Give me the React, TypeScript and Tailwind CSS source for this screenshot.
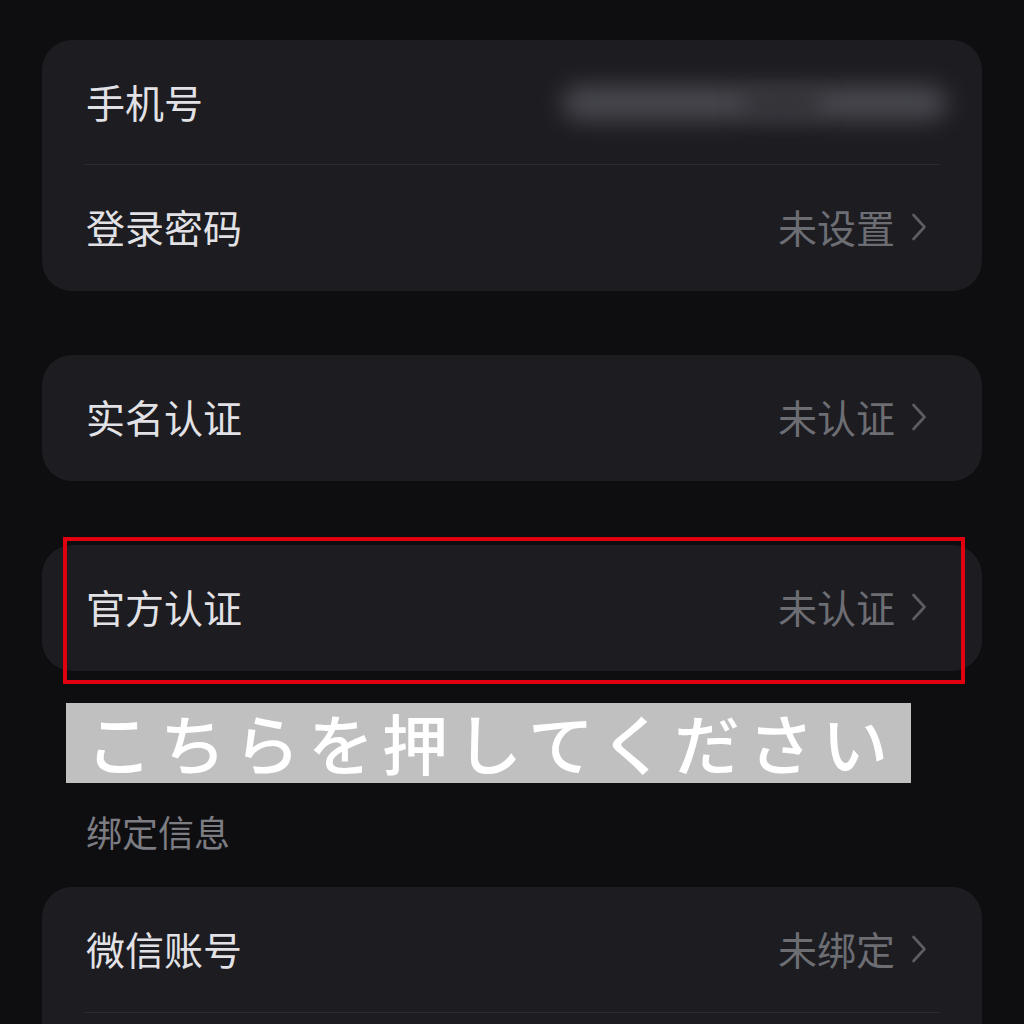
const cjk = "font-['Noto_Sans_CJK_SC','Noto_Sans',sans-serif]";

function Chevron() {
  return (
    <svg width="16" height="30" viewBox="0 0 16 30" fill="none" className="text-[#5d5d64]">
      <path d="M2.5 3L13.5 15L2.5 27" stroke="currentColor" strokeWidth="2.6" strokeLinecap="round" strokeLinejoin="round" />
    </svg>
  );
}

function Row({ label, value, divider }: { label: string; value?: string; divider?: boolean }) {
  return (
    <div className="relative flex h-[126px] items-center justify-between pb-[3px] pl-[44px] pr-[55px]">
      <span className="text-[39px] leading-none text-[#e2e2e6]">{label}</span>
      {value && (
        <span className="flex items-center gap-[16px]">
          <span className="text-[39px] leading-none text-[#6d6d74]">{value}</span>
          <Chevron />
        </span>
      )}
      {divider && <div className="absolute bottom-0 left-[42px] right-[42px] h-px bg-[#2a2a30]" />}
    </div>
  );
}

export default function App() {
  return (
    <div className={`h-[1024px] w-[1024px] overflow-hidden bg-[#0e0e11] px-[42px] pt-[40px] ${cjk}`}>
      {/* Account */}
      <div className="rounded-[30px] bg-[#1c1c21]">
        <div className="relative flex h-[125px] items-center pb-[3px] pl-[44px]">
          <span className="text-[39px] leading-none text-[#e2e2e6]">手机号</span>
          {/* blurred phone number */}
          <div className="absolute left-[520px] top-[46px] h-[34px] w-[385px] rounded-full bg-[#55555c] opacity-80 blur-md" />
          <div className="absolute left-[700px] top-[56px] h-[16px] w-[80px] rounded-full bg-[#26262b] blur-md" />
          <div className="absolute bottom-0 left-[42px] right-[42px] h-px bg-[#2a2a30]" />
        </div>
        <Row label="登录密码" value="未设置" />
      </div>

      <div className="mt-[64px] rounded-[30px] bg-[#1c1c21]">
        <Row label="实名认证" value="未认证" />
      </div>

      <div className="relative mt-[64px] rounded-[30px] bg-[#1c1c21]">
        <Row label="官方认证" value="未认证" />
        <div className="absolute left-[21px] top-[-8px] h-[147px] w-[902px] border-[4px] border-[#e0000f]" />
      </div>

      <div className="ml-[24px] mt-[32px] flex h-[80px] w-[845px] items-center bg-[#c0c0c0] pb-[4px] pl-[20px]">
        <span className="whitespace-nowrap font-['Noto_Sans_CJK_JP',sans-serif] text-[66px] font-medium leading-none tracking-[8px] text-white">
          こちらを押してください
        </span>
      </div>

      <div className="mt-[26px] pl-[44px] text-[36px] leading-[44px] text-[#7c7c83]">绑定信息</div>

      <div className="mt-[34px] rounded-[30px] bg-[#1c1c21]">
        <Row label="微信账号" value="未绑定" divider />
        <Row label="" />
      </div>
    </div>
  );
}
